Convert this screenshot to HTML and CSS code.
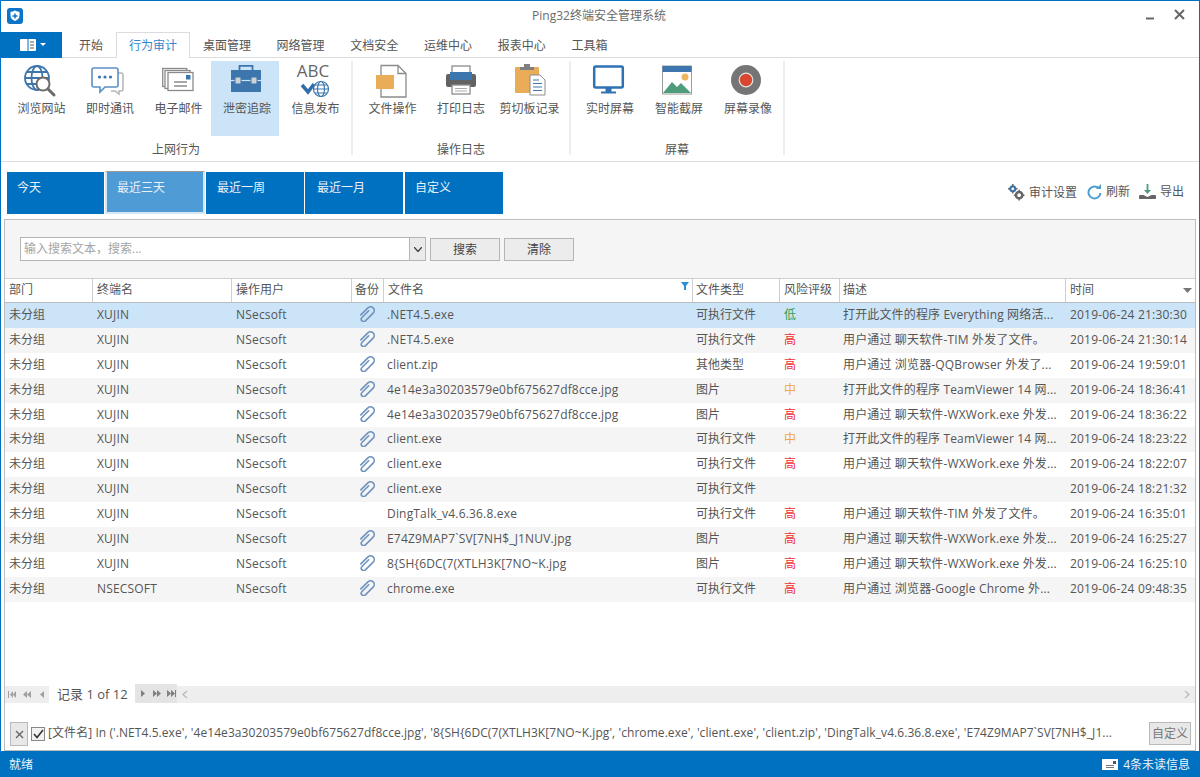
FILE: index.html
```html
<!DOCTYPE html>
<html lang="zh-CN">
<head>
<meta charset="utf-8">
<title>Ping32终端安全管理系统</title>
<link rel="stylesheet" href="styles.css">
</head>
<body>
<svg class="defs" width="0" height="0" aria-hidden="true">
  <symbol id="clip" viewBox="0 0 16 16">
    <g transform="rotate(-45 8 8)" fill="none" stroke="#6f93bd" stroke-width="1.600" stroke-linecap="round">
      <path d="M3 4.300H13a3.700 3.700 0 0 1 0 7.400H2a2.400 2.400 0 0 1 0-4.800H11.500"/>
    </g>
  </symbol>
</svg>
<div class="app">
  <header class="titlebar">
    <svg class="logo" width="16" height="16" viewBox="0 0 16 16"><rect width="16" height="16" rx="3" fill="#0f74c8"/><path d="M8 2.500c1.700 1 3 1.300 4.500 1.300v4c0 2.700-2 4.200-4.500 5.200-2.500-1-4.500-2.500-4.500-5.200v-4C5 3.800 6.300 3.500 8 2.500z" fill="#fff"/><path d="M8 5.500v5M5.500 8h5" stroke="#0f74c8" stroke-width="1.500"/></svg>
    <div class="title">Ping32终端安全管理系统</div>
    <div class="winbtns">
      <svg width="10" height="10" viewBox="0 0 10 10"><path d="M1 7.500h8" stroke="#666" stroke-width="2"/></svg>
      <svg width="11" height="11" viewBox="0 0 11 11"><path d="M1 1l9 9M10 1l-9 9" stroke="#666" stroke-width="2"/></svg>
    </div>
  </header>

  <nav class="tabs">
    <div class="appmenu">
      <svg width="16" height="12" viewBox="0 0 16 12"><rect width="16" height="12" rx="1" fill="#fff"/><path d="M8 0v12" stroke="#0070c0"/><path d="M10 3h4M10 6h4M10 9h4" stroke="#555"/></svg>
      <svg width="6" height="4" viewBox="0 0 6 4"><path d="M0 0h6L3 3z" fill="#fff"/></svg>
    </div>
    <div class="tab t-kaishi">开始</div>
    <div class="tab tab-on">行为审计</div>
    <div class="tab">桌面管理</div>
    <div class="tab">网络管理</div>
    <div class="tab">文档安全</div>
    <div class="tab">运维中心</div>
    <div class="tab">报表中心</div>
    <div class="tab">工具箱</div>
  </nav>

  <section class="ribbon">
    <div class="group g1">
      <div class="btns">
        <div class="rb">
          <svg width="34" height="34" viewBox="2 0 34 34"><g fill="none" stroke="#3d76ad" stroke-width="1.800"><circle cx="14" cy="14" r="12"/><ellipse cx="14" cy="14" rx="5.500" ry="12"/><path d="M2 14h24M4 8h20M4 20h14"/></g><circle cx="20" cy="20" r="6.500" fill="#fff" stroke="#6b6b6b" stroke-width="2"/><path d="M25 25l6 6" stroke="#6b6b6b" stroke-width="3" stroke-linecap="round"/></svg>
          <span>浏览网站</span>
        </div>
        <div class="rb">
          <svg width="34" height="34" viewBox="2 0 34 34"><path d="M9 9h21a2 2 0 0 1 2 2v14a2 2 0 0 1-2 2h-2v3l-4-3h-4" fill="#fff" stroke="#b5b5b5" stroke-width="1.500"/><path d="M3 4h22a2 2 0 0 1 2 2v15a2 2 0 0 1-2 2H14l-5 5v-5H3a2 2 0 0 1-2-2V6a2 2 0 0 1 2-2z" fill="#fff" stroke="#5b8fc4" stroke-width="1.600"/><circle cx="8.500" cy="13" r="1.600" fill="#3d76ad"/><circle cx="14" cy="13" r="1.600" fill="#3d76ad"/><circle cx="19.500" cy="13" r="1.600" fill="#3d76ad"/></svg>
          <span>即时通讯</span>
        </div>
        <div class="rb">
          <svg width="34" height="34" viewBox="0 0 34 34"><g fill="#fff" stroke="#8a8a8a" stroke-width="1.300"><rect x=".7" y="4.500" width="24" height="18"/><rect x="3" y="6.500" width="25" height="18"/><rect x="6" y="8.500" width="25" height="18"/></g><rect x="24" y="11" width="4.500" height="4.500" fill="#3d76ad"/><path d="M12 18h13M12 22h13" stroke="#8a8a8a" stroke-width="1.300"/></svg>
          <span>电子邮件</span>
        </div>
        <div class="rb rb-on">
          <svg width="34" height="34" viewBox="0 0 34 34"><path d="M9.500 6V1.800h13V6" fill="none" stroke="#3d76ad" stroke-width="1.800"/><rect x="1" y="6" width="30" height="22" fill="#3d76ad"/><path d="M1 16.500h30" stroke="#cce4f7" stroke-width="1.200"/><rect x="5" y="13" width="6" height="7" rx="1" fill="#cfd3d6" stroke="#3d76ad"/><rect x="21" y="13" width="6" height="7" rx="1" fill="#cfd3d6" stroke="#3d76ad"/></svg>
          <span>泄密追踪</span>
        </div>
        <div class="rb">
          <div class="abc-wrap">
            <span class="abc">ABC</span>
            <svg width="30" height="18" viewBox="0 0 30 18"><path d="M2 6l6 7 6-8" fill="none" stroke="#2f6ea8" stroke-width="3.500"/><g fill="none" stroke="#3d76ad" stroke-width="1.200"><circle cx="21" cy="10" r="7.500"/><ellipse cx="21" cy="10" rx="3.500" ry="7.500"/><path d="M13.500 10h15M15 6h12M15 14h12"/></g></svg>
          </div>
          <span>信息发布</span>
        </div>
      </div>
      <div class="glabel">上网行为</div>
    </div>
    <div class="group g2">
      <div class="btns">
        <div class="rb">
          <svg width="34" height="34" viewBox="0 0 34 34"><path d="M5 1.500h17l8 8V33H5z" fill="#fff" stroke="#8c8c8c" stroke-width="1.300"/><path d="M22 1.500v8h8" fill="none" stroke="#8c8c8c" stroke-width="1.300"/><rect x="0" y="11" width="18" height="14" fill="#e9ad58"/></svg>
          <span>文件操作</span>
        </div>
        <div class="rb">
          <svg width="34" height="34" viewBox="0 0 34 34"><rect x="8" y="2" width="18" height="8" fill="#fff" stroke="#8c8c8c" stroke-width="1.300"/><rect x="2" y="10" width="30" height="13" rx="2" fill="#626262"/><rect x="6" y="8" width="22" height="8" fill="#3d76ad"/><rect x="8" y="21" width="18" height="9" fill="#fff" stroke="#8c8c8c" stroke-width="1.300"/><path d="M11 24.500h12M11 27h12" stroke="#aaa"/></svg>
          <span>打印日志</span>
        </div>
        <div class="rb">
          <svg width="34" height="34" viewBox="0 0 34 34"><rect x="2" y="3" width="24" height="26" rx="1" fill="#e9ad58"/><rect x="7" y="3" width="14" height="3" fill="#808080"/><path d="M11 3h6V0h-6z" fill="#808080"/><path d="M17 11h10l5 5v15H17z" fill="#fff" stroke="#8c8c8c"/><path d="M20 16h6M20 19.500h9M20 23h9M20 26.500h9" stroke="#3d76ad" stroke-width="1.200"/></svg>
          <span>剪切板记录</span>
        </div>
      </div>
      <div class="glabel">操作日志</div>
    </div>
    <div class="group g3">
      <div class="btns">
        <div class="rb">
          <svg width="34" height="34" viewBox="0 0 34 34"><rect x="1.200" y="2.500" width="28.600" height="21" rx="1.500" fill="#fff" stroke="#2f73b4" stroke-width="2.500"/><path d="M12.500 24h6v4h-6z" fill="#2f73b4"/><path d="M8 28.500h15" stroke="#2f73b4" stroke-width="2"/></svg>
          <span>实时屏幕</span>
        </div>
        <div class="rb">
          <svg width="34" height="34" viewBox="0 0 34 34"><rect x=".5" y="2" width="29" height="28" fill="#fff" stroke="#9a9a9a"/><rect x=".5" y="2" width="29" height="6" fill="#3d76ad"/><circle cx="23" cy="13" r="3.500" fill="#efb55c"/><path d="M1 29l9-11 5 5 4-4 10 10z" fill="#4d9c7b"/></svg>
          <span>智能截屏</span>
        </div>
        <div class="rb">
          <svg width="34" height="34" viewBox="0 0 34 34"><circle cx="15" cy="16" r="15" fill="#757575"/><circle cx="15" cy="16" r="6.800" fill="#d9472f" stroke="#e4e4e4" stroke-width="1.200"/></svg>
          <span>屏幕录像</span>
        </div>
      </div>
      <div class="glabel">屏幕</div>
    </div>
  </section>

  <section class="datebar">
    <div class="dt dt-first">今天</div>
    <div class="dt dt-on">最近三天</div>
    <div class="dt dt-week">最近一周</div>
    <div class="dt dt-month">最近一月</div>
    <div class="dt dt-last">自定义</div>
    <div class="tools">
      <div class="tool">
        <svg width="17" height="17" viewBox="0 0 16 16"><circle cx="4.500" cy="4.500" r="2.300" fill="none" stroke="#3d76ad" stroke-width="2"/><circle cx="10.500" cy="10.500" r="3" fill="none" stroke="#666" stroke-width="2.400"/><path d="M4.500 0v2M4.500 7v2M0 4.500h2M7 4.500h2M10.500 5.500v2M10.500 13.500v2M5.500 10.500h2M13.500 10.500h2" stroke="#666" stroke-width="1.400"/></svg>
        <span>审计设置</span>
      </div>
      <div class="tool">
        <svg width="16" height="16" viewBox="0 0 16 16"><path d="M13 4.500A6 6 0 1 0 14.500 9" fill="none" stroke="#4d9fd0" stroke-width="2"/><path d="M10 5h5V0z" fill="#4d9fd0"/></svg>
        <span>刷新</span>
      </div>
      <div class="tool">
        <svg width="17" height="16" viewBox="0 0 16 16"><path d="M8 0v8" stroke="#4d9c7b" stroke-width="1.800"/><path d="M4.500 6 8 10l3.500-4z" fill="#4d9c7b"/><path d="M1 15a2 2 0 0 1 0-4h3l4 2 4-2h3a2 2 0 0 1 0 4z" fill="#666"/></svg>
        <span>导出</span>
      </div>
    </div>
  </section>

  <main class="panel">
    <div class="search">
      <div class="sbox"><span>输入搜索文本，搜索...</span></div>
      <div class="sdrop"><svg width="8" height="5" viewBox="0 0 8 5"><path d="M0 0l4 4.500L8 0" fill="none" stroke="#444" stroke-width="1.400"/></svg></div>
      <div class="sbtn">搜索</div>
      <div class="sbtn">清除</div>
    </div>

    <div class="row head">
      <div>部门</div><div>终端名</div><div>操作用户</div><div class="bk-h">备份</div>
      <div>文件名<svg class="filter" width="8" height="8" viewBox="0 0 8 8"><path d="M0 0h8L5 4v4H3V4z" fill="#2a90d0"/></svg></div>
      <div>文件类型</div><div>风险评级</div><div>描述</div>
      <div>时间<svg class="sort" width="9" height="5" viewBox="0 0 9 5"><path d="M0 0h9L4.500 5z" fill="#777"/></svg></div>
    </div>

    <div class="row sel"><div>未分组</div><div class="lat">XUJIN</div><div class="lat">NSecsoft</div><div class="bk"><svg width="16" height="16"><use href="#clip"/></svg></div><div class="lat">.NET4.5.exe</div><div>可执行文件</div><div class="lo">低</div><div class="desc">打开此文件的程序 Everything 网络活...</div><div class="time">2019-06-24 21:30:30</div></div>
    <div class="row"><div>未分组</div><div class="lat">XUJIN</div><div class="lat">NSecsoft</div><div class="bk"><svg width="16" height="16"><use href="#clip"/></svg></div><div class="lat">.NET4.5.exe</div><div>可执行文件</div><div class="hi">高</div><div class="desc">用户通过 聊天软件-TIM 外发了文件。</div><div class="time">2019-06-24 21:30:14</div></div>
    <div class="row"><div>未分组</div><div class="lat">XUJIN</div><div class="lat">NSecsoft</div><div class="bk"><svg width="16" height="16"><use href="#clip"/></svg></div><div class="lat">client.zip</div><div>其他类型</div><div class="hi">高</div><div class="desc">用户通过 浏览器-QQBrowser 外发了...</div><div class="time">2019-06-24 19:59:01</div></div>
    <div class="row"><div>未分组</div><div class="lat">XUJIN</div><div class="lat">NSecsoft</div><div class="bk"><svg width="16" height="16"><use href="#clip"/></svg></div><div class="lat">4e14e3a30203579e0bf675627df8cce.jpg</div><div>图片</div><div class="mi">中</div><div class="desc">打开此文件的程序 TeamViewer 14 网...</div><div class="time">2019-06-24 18:36:41</div></div>
    <div class="row"><div>未分组</div><div class="lat">XUJIN</div><div class="lat">NSecsoft</div><div class="bk"><svg width="16" height="16"><use href="#clip"/></svg></div><div class="lat">4e14e3a30203579e0bf675627df8cce.jpg</div><div>图片</div><div class="hi">高</div><div class="desc">用户通过 聊天软件-WXWork.exe 外发...</div><div class="time">2019-06-24 18:36:22</div></div>
    <div class="row"><div>未分组</div><div class="lat">XUJIN</div><div class="lat">NSecsoft</div><div class="bk"><svg width="16" height="16"><use href="#clip"/></svg></div><div class="lat">client.exe</div><div>可执行文件</div><div class="mi">中</div><div class="desc">打开此文件的程序 TeamViewer 14 网...</div><div class="time">2019-06-24 18:23:22</div></div>
    <div class="row"><div>未分组</div><div class="lat">XUJIN</div><div class="lat">NSecsoft</div><div class="bk"><svg width="16" height="16"><use href="#clip"/></svg></div><div class="lat">client.exe</div><div>可执行文件</div><div class="hi">高</div><div class="desc">用户通过 聊天软件-WXWork.exe 外发...</div><div class="time">2019-06-24 18:22:07</div></div>
    <div class="row"><div>未分组</div><div class="lat">XUJIN</div><div class="lat">NSecsoft</div><div class="bk"><svg width="16" height="16"><use href="#clip"/></svg></div><div class="lat">client.exe</div><div>可执行文件</div><div></div><div></div><div class="time">2019-06-24 18:21:32</div></div>
    <div class="row"><div>未分组</div><div class="lat">XUJIN</div><div class="lat">NSecsoft</div><div class="bk"></div><div class="lat">DingTalk_v4.6.36.8.exe</div><div>可执行文件</div><div class="hi">高</div><div class="desc">用户通过 聊天软件-TIM 外发了文件。</div><div class="time">2019-06-24 16:35:01</div></div>
    <div class="row"><div>未分组</div><div class="lat">XUJIN</div><div class="lat">NSecsoft</div><div class="bk"><svg width="16" height="16"><use href="#clip"/></svg></div><div class="lat">E74Z9MAP7`SV[7NH$_J1NUV.jpg</div><div>图片</div><div class="hi">高</div><div class="desc">用户通过 聊天软件-WXWork.exe 外发...</div><div class="time">2019-06-24 16:25:27</div></div>
    <div class="row"><div>未分组</div><div class="lat">XUJIN</div><div class="lat">NSecsoft</div><div class="bk"><svg width="16" height="16"><use href="#clip"/></svg></div><div class="lat">8{SH{6DC(7(XTLH3K[7NO~K.jpg</div><div>图片</div><div class="hi">高</div><div class="desc">用户通过 聊天软件-WXWork.exe 外发...</div><div class="time">2019-06-24 16:25:10</div></div>
    <div class="row"><div>未分组</div><div class="lat">NSECSOFT</div><div class="lat">NSecsoft</div><div class="bk"><svg width="16" height="16"><use href="#clip"/></svg></div><div class="lat">chrome.exe</div><div>可执行文件</div><div class="hi">高</div><div class="desc">用户通过 浏览器-Google Chrome 外...</div><div class="time">2019-06-24 09:48:35</div></div>

    <div class="pager">
      <div class="pnav">
        <svg width="40" height="9" viewBox="0 0 40 9"><path fill="#a0a0a0" d="M0 1h1v7H0zM5 1v7L2 4.500zM8 1v7L5 4.500zM19 1v7l-4-3.500zM23 1v7l-4-3.500zM36 1v7l-4-3.500z"/></svg>
      </div>
      <div class="pinfo">记录 1 of 12</div>
      <div class="pnav2">
        <svg width="42" height="9" viewBox="0 0 42 9"><path fill="#808080" d="M6 1v7l4-3.500zM18 1v7l4-3.500zM22 1v7l4-3.500zM32 1v7l4-3.500zM36 1v7l4-3.500zM40 1h1v7h-1z"/></svg>
      </div>
      <svg class="parrow" width="6" height="9" viewBox="0 0 6 9"><path d="M5 1 1 4.500 5 8" fill="none" stroke="#bbb" stroke-width="1.400"/></svg>
      <svg class="parrow right" width="6" height="9" viewBox="0 0 6 9"><path d="M1 1l4 3.500L1 8" fill="none" stroke="#bbb" stroke-width="1.400"/></svg>
    </div>

    <div class="filterbar">
      <div class="fx"><svg width="9" height="9" viewBox="0 0 9 9"><path d="M1 1l7 7M8 1 1 8" stroke="#666" stroke-width="1.400"/></svg></div>
      <div class="fcheck"><svg width="11" height="10" viewBox="0 0 11 10"><path d="M1 5l3 3.500L10 1" fill="none" stroke="#333" stroke-width="1.600"/></svg></div>
      <div class="ftext">[文件名] In ('.NET4.5.exe', '4e14e3a30203579e0bf675627df8cce.jpg', '8{SH{6DC(7(XTLH3K[7NO~K.jpg', 'chrome.exe', 'client.exe', 'client.zip', 'DingTalk_v4.6.36.8.exe', 'E74Z9MAP7`SV[7NH$_J1...</div>
      <div class="fcustom">自定义</div>
    </div>
  </main>

  <footer class="status">
    <span>就绪</span>
    <div class="msg">
      <svg width="16" height="12" viewBox="0 0 16 12"><rect width="16" height="11" fill="#fff"/><rect x="11" y="2" width="3" height="3" fill="#555"/><path d="M4 6.500h8M4 8.500h8" stroke="#777"/></svg>
      <span>4条未读信息</span>
    </div>
  </footer>
</div>
</body>
</html>
```
FILE: styles.css
```css
* { box-sizing: border-box; }
html, body { margin: 0; padding: 0; }
body {
  width: 1200px; height: 777px; overflow: hidden; background: #fff;
  font: 12px/16px "Open Sans", "Noto Sans CJK SC", sans-serif; color: #555;
}
.defs { position: absolute; }
.app {
  width: 1200px; height: 777px; display: flex; flex-direction: column;
  border: 1px solid #0070c0; border-bottom: 0; overflow: hidden;
}

.titlebar { height: 31px; flex: none; display: flex; align-items: flex-start; padding: 7px 0 0 6px; }
.logo { flex: none; }
.title { flex: 1; text-align: center; color: #6a6a6a; padding-left: 30px; }
.winbtns { display: flex; gap: 19px; padding: 4px 14px 0 0; align-items: flex-start; }
.winbtns svg:first-child { margin-top: -1px; }
.winbtns svg:last-child { margin-top: -3px; }

.tabs { height: 26px; flex: none; display: flex; border-bottom: 1px solid #dcdcdc; }
.appmenu {
  width: 62px; height: 26px; background: #0070c0; display: flex; align-items: center;
  justify-content: center; gap: 4px; margin-left: -1px; padding-left: 4px; flex: none;
}
.tab { padding: 6px 12.850px 0; color: #555; white-space: nowrap; height: 26px; }
.t-kaishi { padding: 6px 13px 0 17px; }
.tab-on {
  background: #fff; color: #2f86cc; border: 1px solid #dcdcdc; border-bottom: 0;
  padding: 5px 12px 0; height: 26px;
}

.ribbon { height: 104px; flex: none; display: flex; border-bottom: 1px solid #dedede; padding-top: 3px; }
.group { display: flex; flex-direction: column; align-items: center; height: 94px; border-right: 2px solid #eee; }
.g1 { width: 352px; padding-left: 5px; }
.g2 { width: 218px; }
.g3 { width: 214px; }
.g3 .btns { padding-left: 4px; }
.g3 .rb { width: 69px; }
.btns { display: flex; height: 75px; flex: none; }
.rb { width: 68.500px; display: flex; flex-direction: column; align-items: center; padding-top: 3px; color: #555; }
.rb svg { flex: none; overflow: visible; }
.rb > span { margin-top: 3px; white-space: nowrap; }
.rb-on { background: #cce4f7; margin-left: -2px; margin-right: 2px; padding-left: 4px; }
.abc-wrap { height: 34px; display: flex; flex-direction: column; align-items: center; margin-top: -1px; margin-bottom: 1px; }
.abc { font-size: 17px; line-height: 16px; color: #666; font-family: "Open Sans", sans-serif; margin-right: 5px; }
.glabel { margin-top: 6px; height: 16px; text-align: center; }
.g1 .glabel { padding-right: 5px; }

.datebar { height: 57px; flex: none; display: flex; padding: 10px 0 0 6px; gap: 1px; }
.dt { width: 98px; height: 42px; background: #0070c0; color: #e8f2fa; padding: 8px 0 0 10px; }
.dt-first { width: 97px; }
.dt-week { padding-left: 11px; }
.dt-month { padding-left: 12px; }
.dt-last { margin-left: 1px; }
.dt-on {
  width: 100px; background: #4e9bd5; border: 2px solid #d6e6f2; border-top-color: #9a9a9a;
  border-top-width: 1px; margin-top: -1px; height: 43px;
}
.tools { margin-left: auto; display: flex; gap: 9px; padding: 12px 15px 0 0; align-items: flex-start; }
.tool { display: flex; align-items: center; gap: 4px; }

.panel {
  flex: 1; min-height: 0; margin: 0 3px 0 3px; border: 1px solid #bdbdbd; display: flex; flex-direction: column;
}
.search {
  height: 59px; flex: none; background: #f5f5f5; display: flex; align-items: flex-start;
  padding: 17px 0 0 15px; border-bottom: 1px solid #cfcfcf;
}
.sbox { width: 390px; height: 24px; background: #fff; border: 1px solid #b5b5b5; padding: 3px 0 0 3px; color: #a5a5a5; }
.sdrop {
  width: 16px; height: 24px; background: #eaeaea; border: 1px solid #b5b5b5; border-left: 0;
  display: flex; align-items: center; justify-content: center; margin-right: 4px;
}
.sbtn {
  width: 70px; height: 23px; background: #ececec; border: 1px solid #b5b5b5; text-align: center;
  padding-top: 3px; margin-right: 4px; margin-top: 1px; color: #444;
}

.row {
  display: grid; grid-template-columns: 88px 139px 120px 32px 309px 87px 60px 226px 1fr;
  height: 24.900px; line-height: 23px; flex: none; background: #f5f5f5;
}
.row > div { padding-left: 4px; white-space: nowrap; overflow: hidden; min-width: 0; }
.row:nth-child(odd) { background: #fff; }
.row.sel { background: #cce4f7; }
.row.head { height: 24px; background: #fff; border-bottom: 1px solid #bdbdbd; line-height: 22px; }
.head > div { border-right: 1px solid #cfcfcf; position: relative; }
.head > div:last-child { border-right: 0; }
.row .bk-h { padding-left: 3px; }
.filter { position: absolute; right: 3px; top: 3px; }
.sort { position: absolute; right: 3px; top: 9px; }
.row .bk { display: flex; align-items: center; justify-content: center; padding: 0 2px 2px 0; }
.row .lat { letter-spacing: .18px; }
.row > div:nth-child(5), .row > div:nth-child(6), .row > div:nth-child(8) { padding-left: 3px; }
.row.head > div:nth-child(5) { padding-left: 4px; }
.desc { letter-spacing: .15px; }
.time { letter-spacing: .2px; }
.hi { color: #ef3030; }
.lo { color: #35a050; }
.mi { color: #f0a840; }

.pager {
  margin-top: auto; height: 21px; flex: none; display: flex; align-items: flex-end; position: relative;
  margin-bottom: 17px;
}
.pager::before { content: ""; position: absolute; left: 0; right: 0; top: 2px; height: 17px; background: #eee; }
.pnav { position: relative; width: 44px; height: 17px; margin-bottom: 2px; display: flex; align-items: center; padding-left: 3px; }
.pinfo { position: relative; width: 86px; height: 21px; background: #fff; font-size: 13px; padding: 2px 0 0 8px; }
.pnav2 { position: relative; width: 42px; height: 19px; background: #e4e4e4; margin-bottom: 2px; display: flex; align-items: center; }
.parrow { position: absolute; left: 177px; top: 6px; }
.parrow.right { left: auto; right: 5px; }

.filterbar { height: 27px; flex: none; display: flex; align-items: flex-start; padding-left: 5px; margin-bottom: 1px; }
.fx {
  width: 18px; height: 24px; background: #e8e8e8; border: 1px solid #b9b9b9;
  display: flex; align-items: center; justify-content: center; flex: none;
}
.fcheck {
  width: 14px; height: 14px; border: 1px solid #888; background: #f2f2f2; margin: 5px 0 0 3px;
  display: flex; align-items: center; justify-content: center; flex: none;
}
.ftext { width: 1100px; flex: none; margin: 3px 0 0 3px; white-space: nowrap; overflow: hidden; letter-spacing: .07px; }
.fcustom {
  position: absolute; left: 1149px; width: 42px; height: 23px; background: #e8e8e8; border: 1px solid #b9b9b9;
  text-align: center; padding-top: 3px; color: #777;
}

.status {
  height: 26px; flex: none; background: #0070c0; color: #eef5fb; margin: 0 -1px; display: flex;
  align-items: center; justify-content: space-between; padding: 1px 10px 0 9px;
}
.msg { display: flex; align-items: center; gap: 5px; }
```
